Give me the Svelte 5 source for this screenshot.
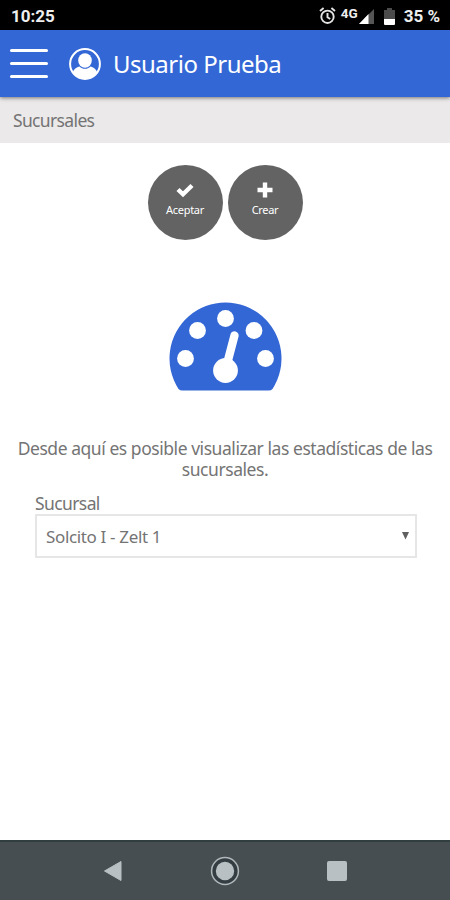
<script lang="ts">
	let { user = "Usuario Prueba" }: { user?: string } = $props();

	const BRANCHES = ["Solcito I - Zelt 1"];

	// centres of the dial marks on the gauge
	const MARKS = [
		[16.5, 56.5],
		[28.5, 28.5],
		[56.5, 16.5],
		[85, 28.5],
		[96.5, 56.5],
	];

	let branch = $state(BRANCHES[0]);
</script>

<div class="screen">
	<div class="status">
		<span class="clock">10:25</span>
		<svg class="alarm" width="17" height="18" viewBox="0 0 17 18" fill="none" stroke="#e4e4e4" stroke-width="1.9">
			<circle cx="8.5" cy="9.8" r="6.2" />
			<path d="M8.5 6v4.2l2.7 1.8M1 4l3.6-3M16 4l-3.6-3" />
		</svg>
		<span class="network">4G</span>
		<svg class="signal" width="15" height="15" viewBox="0 0 15 15">
			<path d="M15 0v15H0z" fill="#555" />
			<path d="M9.5 5v10H0z" fill="#fff" />
		</svg>
		<svg class="battery" width="11" height="17" viewBox="0 0 11 17">
			<path d="M3 0h5v2h3v9H0V2h3z" fill="#4b4b4b" />
			<path d="M0 11h11v5a1 1 0 0 1-1 1H1a1 1 0 0 1-1-1z" fill="#fff" />
		</svg>
		<span class="percent">35 %</span>
	</div>

	<header>
		<button class="menu" aria-label="Menu">
			<span></span>
			<span></span>
			<span></span>
		</button>
		<svg class="avatar" width="32" height="32" viewBox="0 0 32 32">
			<clipPath id="face"><circle cx="16" cy="16" r="15" /></clipPath>
			<circle cx="16" cy="16" r="14.9" fill="none" stroke="#fff" stroke-width="2" />
			<g clip-path="url(#face)" fill="#fff">
				<ellipse cx="16" cy="12.5" rx="6.8" ry="7.3" />
				<path d="M3.5 26c.3-3.500 2.500-6.400 7-7.600 3 3.200 8 3.200 11 0 4.500 1.200 6.700 4.100 7 7.600L24 32H8z" />
			</g>
		</svg>
		<h1>{user}</h1>
	</header>

	<div class="crumb">Sucursales</div>

	<main>
		<div class="actions">
			<button class="round">
				<svg width="18" height="14" viewBox="0 0 18 14">
					<path d="M2 6.500l5 4.800L16 2.500" fill="none" stroke="#fff" stroke-width="4.400" />
				</svg>
				<span>Aceptar</span>
			</button>
			<button class="round">
				<svg width="16" height="16" viewBox="0 0 16 16">
					<path d="M8 .5v15M.5 8h15" fill="none" stroke="#fff" stroke-width="4.400" stroke-linejoin="round" />
				</svg>
				<span>Crear</span>
			</button>
		</div>

		<svg class="gauge" width="113" height="89" viewBox="0 0 113 89">
			<path d="M13.500 88.500Q11 88.500 9.500 87A56 56 0 1 1 103.500 87Q102 88.500 99.500 88.500z" fill="#3367d6" />
			{#each MARKS as [x, y]}
				<circle cx={x} cy={y} r="8.400" fill="#fff" />
			{/each}
			<path d="M58 62l7.500-28.500" stroke="#fff" stroke-width="8.400" stroke-linecap="round" />
			<circle cx="56.500" cy="68.500" r="12.400" fill="#fff" />
		</svg>

		<p>Desde aquí es posible visualizar las estadísticas de las sucursales.</p>

		<div class="field">
			<label for="branch">Sucursal</label>
			<div class="select">
				<select id="branch" bind:value={branch}>
					{#each BRANCHES as name}
						<option value={name}>{name}</option>
					{/each}
				</select>
				<svg class="caret" width="7" height="8" viewBox="0 0 7 8">
					<path d="M0 0h7L3.500 7.500z" fill="#606060" />
				</svg>
			</div>
		</div>
	</main>

	<nav>
		<svg width="20" height="22" viewBox="0 0 20 22">
			<path d="M18 1.500v19L1.500 11z" fill="#b8c0c3" stroke="#b8c0c3" stroke-linejoin="round" />
		</svg>
		<svg width="30" height="30" viewBox="0 0 30 30">
			<circle cx="15" cy="15" r="13.400" fill="#343e42" stroke="#b0b8bb" stroke-width="1.500" />
			<circle cx="15" cy="15" r="9.200" fill="#b8c0c3" />
		</svg>
		<svg width="20" height="20" viewBox="0 0 20 20">
			<rect width="20" height="20" rx="2" fill="#b8c0c3" />
		</svg>
	</nav>
</div>

<style>
	:global(body) {
		margin: 0;
	}

	.screen {
		display: flex;
		flex-direction: column;
		width: 450px;
		height: 900px;
		overflow: hidden;
		background: #fff;
		color: #747474;
		font-family: "Noto Sans", "Open Sans", sans-serif;
	}

	button {
		padding: 0;
		border: none;
		background: none;
		font-family: inherit;
		cursor: pointer;
	}

	.status {
		display: flex;
		align-items: center;
		flex: none;
		box-sizing: border-box;
		height: 30px;
		padding: 2px 10px 0 11px;
		background: #000;
		color: #eee;
		font: bold 17px/30px Roboto, sans-serif;
	}

	.alarm {
		margin-left: auto;
	}

	.network {
		margin: -6px 1px 0 5px;
		font-size: 13.5px;
	}

	.battery {
		margin: 0 9px 0 10px;
	}

	header {
		display: flex;
		align-items: center;
		flex: none;
		box-sizing: border-box;
		position: relative;
		height: 67px;
		padding-left: 10px;
		background: #3367d6;
		box-shadow: 0 1px 4px rgba(0, 0, 0, 0.5);
	}

	.menu {
		display: flex;
		flex-direction: column;
		gap: 10px;
		width: 38px;
		margin-right: 21px;
	}

	.menu span {
		height: 3px;
		border-radius: 2px;
		background: #fff;
	}

	h1 {
		margin: 0 0 0 12px;
		color: #fff;
		font-size: 24px;
		font-weight: 400;
		letter-spacing: -0.5px;
	}

	.crumb {
		flex: none;
		height: 46px;
		padding-left: 13px;
		background: #ebe9ea;
		font-size: 17.5px;
		line-height: 47px;
		letter-spacing: -0.65px;
	}

	main {
		display: flex;
		flex-direction: column;
		align-items: center;
		flex: 1;
	}

	.actions {
		display: flex;
		gap: 5px;
		margin-top: 22px;
	}

	.round {
		display: flex;
		flex-direction: column;
		align-items: center;
		width: 75px;
		height: 75px;
		padding-top: 17px;
		border-radius: 50%;
		background: #636363;
		color: #fff;
		font-size: 11px;
		line-height: 14px;
	}

	.round svg {
		height: 16px;
	}

	.round span {
		margin-top: 5px;
		letter-spacing: -0.3px;
	}

	.gauge {
		margin-top: 62px;
	}

	p {
		width: 430px;
		margin: 47px 0 0;
		font-size: 17.5px;
		line-height: 21px;
		letter-spacing: -0.45px;
		text-align: center;
	}

	.field {
		width: 382px;
		margin: 13px 0 0 2px;
		font-size: 17.5px;
	}

	label {
		display: block;
		line-height: 21px;
		letter-spacing: -0.6px;
	}

	.select {
		display: flex;
		align-items: center;
		box-sizing: border-box;
		height: 44px;
		padding: 0 6px 0 9px;
		border: 2px solid #e6e6e6;
	}

	select {
		flex: 1;
		padding: 0;
		border: none;
		appearance: none;
		background: none;
		color: inherit;
		font: 17px "Noto Sans", sans-serif;
		letter-spacing: -0.35px;
	}

	nav {
		display: flex;
		align-items: center;
		flex: none;
		box-sizing: border-box;
		height: 60px;
		padding: 0 103px;
		justify-content: space-between;
		border-top: 2px solid #303e40;
		background: #464e52;
	}
</style>
